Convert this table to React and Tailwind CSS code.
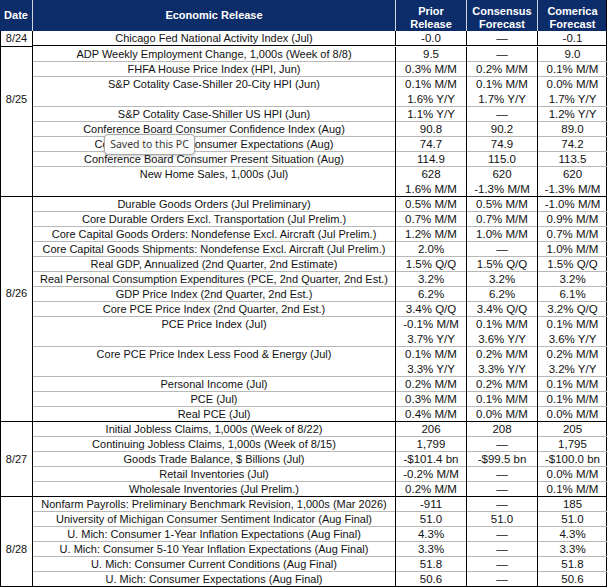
import React from "react";

const sections = [
  {
    date: "8/24",
    labelPad: "pt-0",
    rows: [["Chicago Fed National Activity Index (Jul)", ["-0.0"], ["—"], ["-0.1"]]],
  },
  {
    date: "8/25",
    labelPad: "pt-[45px]",
    rows: [
      ["ADP Weekly Employment Change, 1,000s (Week of 8/8)", ["9.5"], ["—"], ["9.0"]],
      ["FHFA House Price Index (HPI, Jun)", ["0.3% M/M"], ["0.2% M/M"], ["0.1% M/M"]],
      [
        "S&P Cotality Case-Shiller 20-City HPI (Jun)",
        ["0.1% M/M", "1.6% Y/Y"],
        ["0.1% M/M", "1.7% Y/Y"],
        ["0.0% M/M", "1.7% Y/Y"],
      ],
      ["S&P Cotality Case-Shiller US HPI (Jun)", ["1.1% Y/Y"], ["—"], ["1.2% Y/Y"]],
      ["Conference Board Consumer Confidence Index (Aug)", ["90.8"], ["90.2"], ["89.0"]],
      ["Conference Board Consumer Expectations (Aug)", ["74.7"], ["74.9"], ["74.2"]],
      ["Conference Board Consumer Present Situation (Aug)", ["114.9"], ["115.0"], ["113.5"]],
      ["New Home Sales, 1,000s (Jul)", ["628", "1.6% M/M"], ["620", "-1.3% M/M"], ["620", "-1.3% M/M"]],
    ],
  },
  {
    date: "8/26",
    labelPad: "pt-[89px]",
    rows: [
      ["Durable Goods Orders (Jul Preliminary)", ["0.5% M/M"], ["0.5% M/M"], ["-1.0% M/M"]],
      ["Core Durable Orders Excl. Transportation (Jul Prelim.)", ["0.7% M/M"], ["0.7% M/M"], ["0.9% M/M"]],
      ["Core Capital Goods Orders: Nondefense Excl. Aircraft (Jul Prelim.)", ["1.2% M/M"], ["1.0% M/M"], ["0.7% M/M"]],
      ["Core Capital Goods Shipments: Nondefense Excl. Aircraft (Jul Prelim.)", ["2.0%"], ["—"], ["1.0% M/M"]],
      ["Real GDP, Annualized (2nd Quarter, 2nd Estimate)", ["1.5% Q/Q"], ["1.5% Q/Q"], ["1.5% Q/Q"]],
      ["Real Personal Consumption Expenditures (PCE, 2nd Quarter, 2nd Est.)", ["3.2%"], ["3.2%"], ["3.2%"]],
      ["GDP Price Index (2nd Quarter, 2nd Est.)", ["6.2%"], ["6.2%"], ["6.1%"]],
      ["Core PCE Price Index (2nd Quarter, 2nd Est.)", ["3.4% Q/Q"], ["3.4% Q/Q"], ["3.2% Q/Q"]],
      ["PCE Price Index (Jul)", ["-0.1% M/M", "3.7% Y/Y"], ["0.1% M/M", "3.6% Y/Y"], ["0.1% M/M", "3.6% Y/Y"]],
      [
        "Core PCE Price Index Less Food & Energy (Jul)",
        ["0.1% M/M", "3.3% Y/Y"],
        ["0.2% M/M", "3.3% Y/Y"],
        ["0.2% M/M", "3.2% Y/Y"],
      ],
      ["Personal Income (Jul)", ["0.2% M/M"], ["0.2% M/M"], ["0.1% M/M"]],
      ["PCE (Jul)", ["0.3% M/M"], ["0.1% M/M"], ["0.1% M/M"]],
      ["Real PCE (Jul)", ["0.4% M/M"], ["0.0% M/M"], ["0.0% M/M"]],
    ],
  },
  {
    date: "8/27",
    labelPad: "pt-[30px]",
    rows: [
      ["Initial Jobless Claims, 1,000s (Week of 8/22)", ["206"], ["208"], ["205"]],
      ["Continuing Jobless Claims, 1,000s (Week of 8/15)", ["1,799"], ["—"], ["1,795"]],
      ["Goods Trade Balance, $ Billions (Jul)", ["-$101.4 bn"], ["-$99.5 bn"], ["-$100.0 bn"]],
      ["Retail Inventories (Jul)", ["-0.2% M/M"], ["—"], ["0.0% M/M"]],
      ["Wholesale Inventories (Jul Prelim.)", ["0.2% M/M"], ["—"], ["0.1% M/M"]],
    ],
  },
  {
    date: "8/28",
    labelPad: "pt-[45px]",
    rows: [
      ["Nonfarm Payrolls: Preliminary Benchmark Revision, 1,000s (Mar 2026)", ["-911"], ["—"], ["185"]],
      ["University of Michigan Consumer Sentiment Indicator (Aug Final)", ["51.0"], ["51.0"], ["51.0"]],
      ["U. Mich: Consumer 1-Year Inflation Expectations (Aug Final)", ["4.3%"], ["—"], ["4.3%"]],
      ["U. Mich: Consumer 5-10 Year Inflation Expectations (Aug Final)", ["3.3%"], ["—"], ["3.3%"]],
      ["U. Mich: Consumer Current Conditions (Aug Final)", ["51.8"], ["—"], ["51.8"]],
      ["U. Mich: Consumer Expectations (Aug Final)", ["50.6"], ["—"], ["50.6"]],
    ],
  },
];

function Row({ row, last }) {
  const [name, prior, consensus, comerica] = row;
  const lines = prior.length;
  return (
    <div
      className={`grid grid-cols-[363px_71px_71px_69px] border-b ${
        last ? "border-black" : "border-[#b8b8b8]"
      } ${lines === 2 ? "h-[30px]" : "h-[15px]"}`}
    >
      <div className="border-r border-black text-center text-[11px] leading-[15px] whitespace-nowrap">{name}</div>
      {[prior, consensus, comerica].map((vals, i) => (
        <div
          key={i}
          className={`flex flex-col text-center text-[11.5px] leading-[15px] whitespace-nowrap ${
            i < 2 ? "border-r border-black" : ""
          }`}
        >
          {vals.map((v, j) => (
            <span key={j}>{v}</span>
          ))}
        </div>
      ))}
    </div>
  );
}

export default function App() {
  return (
    <div className="w-[610px] h-[588px] bg-white relative font-['Liberation_Sans',Arial,sans-serif] text-[11px] text-[#111]">
      <div className="w-[607px] border-r border-black">
        {/* header */}
        <div className="grid grid-cols-[33px_363px_71px_71px_69px] h-[31px] bg-[#0d2d6a] text-white font-bold text-[11px]">
          <div className="flex items-center justify-center border-r border-white/80">Date</div>
          <div className="flex items-center justify-center border-r border-white/80">Economic Release</div>
          <div className="flex flex-col items-center justify-center pt-[4px] leading-[12.5px] border-r border-white/80">
            <span>Prior</span>
            <span>Release</span>
          </div>
          <div className="flex flex-col items-center justify-center pt-[4px] leading-[12.5px] border-r border-white/80">
            <span>Consensus</span>
            <span>Forecast</span>
          </div>
          <div className="flex flex-col items-center justify-center pt-[4px] leading-[12.5px]">
            <span>Comerica</span>
            <span>Forecast</span>
          </div>
        </div>

        {sections.map((s) => (
          <div key={s.date} className="flex">
            <div
              className={`w-[33px] shrink-0 border-l border-r border-b border-black text-center text-[11px] leading-[15px] ${s.labelPad}`}
            >
              {s.date}
            </div>
            <div className="flex flex-col">
              {s.rows.map((r, i) => (
                <Row key={r[0]} row={r} last={i === s.rows.length - 1} />
              ))}
            </div>
          </div>
        ))}
      </div>

      {/* windows toast over the sheet */}
      <div className="absolute left-[104px] top-[134px] w-[91px] h-[21px] flex items-center justify-center rounded-[4px] border border-[#a9a9a9] bg-[#fbfbfb] shadow-[0_1px_3px_rgba(0,0,0,0.25)] font-['Noto_Sans',sans-serif] text-[10.5px] text-[#3a3a3a]">
        Saved to this PC
      </div>
    </div>
  );
}
